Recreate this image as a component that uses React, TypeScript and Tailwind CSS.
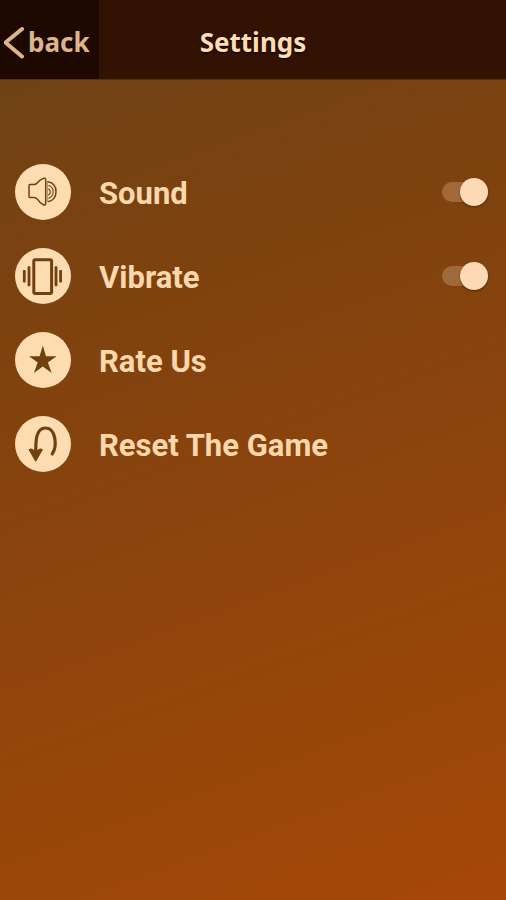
import React, { useState } from 'react';

interface SettingRowProps {
  icon: React.ReactNode;
  children: React.ReactNode;
}

const SettingRow: React.FC<SettingRowProps> = ({ icon, children }) => (
  <li className="flex h-14 items-center gap-7">
    <span className="size-14 shrink-0 rounded-full bg-[#fddcb1] text-[#70400f]">{icon}</span>
    {children}
  </li>
);

interface ToggleProps {
  id: string;
  checked: boolean;
  onChange: (value: boolean) => void;
}

const Toggle: React.FC<ToggleProps> = ({ id, checked, onChange }) => (
  <input
    id={id}
    type="checkbox"
    role="switch"
    checked={checked}
    onChange={(e) => onChange(e.target.checked)}
    className="relative h-7 w-[46px] shrink-0 cursor-pointer appearance-none before:absolute before:inset-x-0 before:inset-y-1 before:rounded-full before:bg-[#a0693a] after:absolute after:left-0 after:top-0 after:size-7 after:rounded-full after:bg-[#fddab3] after:shadow-[0_1px_2px_rgba(40,15,0,0.6)] checked:after:left-[18px]"
  />
);

const SoundIcon = () => (
  <svg viewBox="0 0 56 56" fill="none" stroke="currentColor" strokeWidth="1.5" strokeLinejoin="round" strokeLinecap="round" aria-hidden="true">
    <path d="M14 21.5 Q14 20.6 15 20.6 H19 Q21 20.6 22.8 18.2 Q25.4 15.5 28.4 14.4 Q30.7 13.6 30.7 16 V39 Q30.7 41.8 28.4 40.8 Q25.4 39.6 22.8 35.6 Q21 33.4 19 33.4 H15 Q14 33.4 14 32.4 Z" />
    <path d="M33 17.8 C38 18.6 41 22.5 41 27.8 C41 33 38 37 33.5 37.5" />
    <path d="M33.8 21.5 C37 22.5 38.2 25 38.2 27.8 C38.2 30.6 37 33 33.8 34.2" strokeWidth="1.1" />
    <path d="M33.8 25 C35.8 26.4 35.8 29.4 33.8 30.8" strokeWidth="1.2" />
    <path d="M32.4 17.8 V37.5" strokeWidth="0.5" />
  </svg>
);

const VibrateIcon = () => (
  <svg viewBox="0 0 56 56" fill="currentColor" aria-hidden="true">
    <rect x="18.8" y="11.8" width="17.8" height="33.6" rx="1.5" fill="none" stroke="currentColor" strokeWidth="3" />
    <rect x="12.6" y="18.3" width="2.8" height="20" rx="0.8" />
    <rect x="7.9" y="22" width="2.8" height="12.6" rx="0.8" />
    <rect x="39.6" y="18.3" width="2.8" height="20" rx="0.8" />
    <rect x="44.2" y="22" width="2.8" height="12.6" rx="0.8" />
  </svg>
);

const StarIcon = () => (
  <svg viewBox="0 0 56 56" fill="currentColor" aria-hidden="true">
    <path d="M27.8 13.5 L31 24.2 H41.6 L32.9 30.5 L36.7 41 L27.8 34.6 L18.9 41 L22.7 30.5 L14 24.2 H24.6 Z" />
  </svg>
);

const ResetIcon = () => (
  <svg viewBox="0 0 56 56" aria-hidden="true">
    <path d="M37.2 38 C42.3 30.5 41.2 12 30.6 12 C21 12 20.7 24 20.7 37" fill="none" stroke="currentColor" strokeWidth="3.2" strokeLinecap="round" />
    <path d="M14 33.6 Q16 31.8 19.2 34.6 H22.2 Q25.4 31.8 27.4 33.6 L20.7 45.3 Z" fill="currentColor" stroke="currentColor" strokeLinejoin="round" />
  </svg>
);

const labelClass = "pt-1 text-left font-['Roboto',sans-serif] text-[31px] leading-9 font-bold text-[#fcd7ab]";

export default function App() {
  const [sound, setSound] = useState(true);
  const [vibrate, setVibrate] = useState(true);

  return (
    <div className="min-h-screen bg-[linear-gradient(160deg,#6c4316_0%,#7d420f_30%,#8e440d_58%,#984709_78%,#a64707_100%)]">
      <header className="grid h-20 grid-cols-[1fr_auto_1fr] border-b border-[#5a3210] bg-[#321203] font-['Noto_Sans','Open_Sans',sans-serif] text-[26px] font-bold">
        <button type="button" className="flex w-[99px] items-center gap-1 bg-[#1d0902] pt-1.5 pl-1 text-[#ddb58b]">
          <svg viewBox="0 0 20 32" className="h-8 w-5 shrink-0" fill="none" stroke="currentColor" strokeWidth="4" strokeLinecap="round" strokeLinejoin="round" aria-hidden="true">
            <path d="M18 2 L1.5 15.5 L18 29.5" />
          </svg>
          back
        </button>
        <h1 className="self-center pt-1.5 text-[#ffddb3] [text-shadow:0_1px_2px_#000]">Settings</h1>
      </header>

      <main className="pt-[84px] pr-[18px] pl-[15px]">
        <ul className="flex flex-col gap-7">
          <SettingRow icon={<SoundIcon />}>
            <label htmlFor="sound" className={`flex-1 ${labelClass}`}>Sound</label>
            <Toggle id="sound" checked={sound} onChange={setSound} />
          </SettingRow>
          <SettingRow icon={<VibrateIcon />}>
            <label htmlFor="vibrate" className={`flex-1 ${labelClass}`}>Vibrate</label>
            <Toggle id="vibrate" checked={vibrate} onChange={setVibrate} />
          </SettingRow>
          <SettingRow icon={<StarIcon />}>
            <button type="button" className={labelClass}>Rate Us</button>
          </SettingRow>
          <SettingRow icon={<ResetIcon />}>
            <button type="button" className={labelClass}>Reset The Game</button>
          </SettingRow>
        </ul>
      </main>
    </div>
  );
}
